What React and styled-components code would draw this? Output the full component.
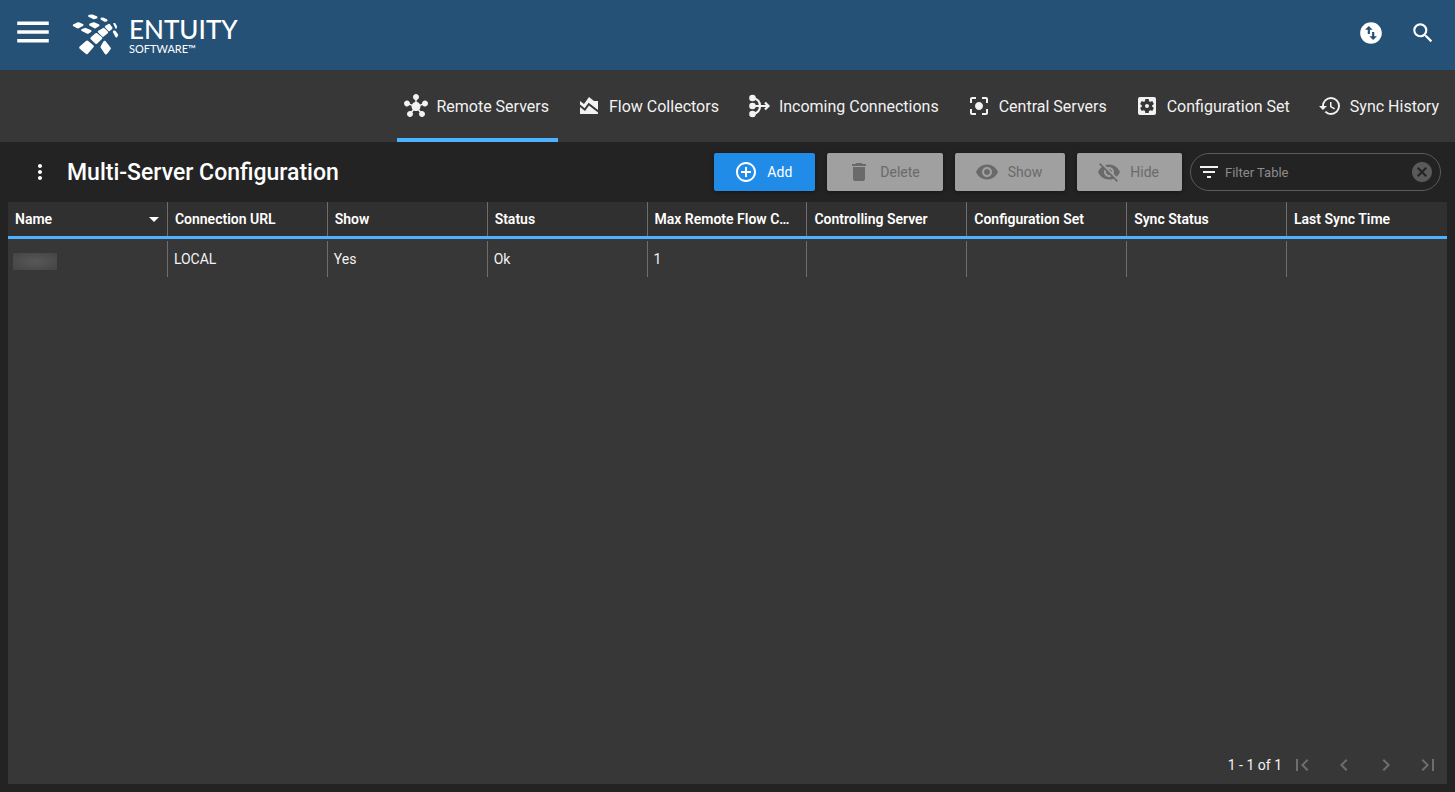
import React, { useState } from "react"
import styled, { createGlobalStyle } from "styled-components"
import {
    MdMenu, MdSearch, MdSwapVerticalCircle, MdHub, MdAreaChart, MdCenterFocusStrong,
    MdSettingsApplications, MdHistory, MdMoreVert, MdAddCircleOutline, MdDelete,
    MdVisibility, MdVisibilityOff, MdFilterList, MdCancel, MdArrowDropDown,
    MdFirstPage, MdChevronLeft, MdChevronRight, MdLastPage
} from "react-icons/md"

const GlobalStyle = createGlobalStyle`
    * {
        box-sizing: border-box;
    }

    body {
        margin: 0;
        background: #232323;
        color: #f2f2f2;
        font-family: Roboto, "Liberation Sans", sans-serif;
        font-size: 14px;
    }

    button, input {
        font-family: inherit;
        font-size: inherit;
    }
`

const Page = styled.div`
    min-height: 100vh;
    display: flex;
    flex-direction: column;
`

const Header = styled.header`
    height: 70px;
    padding: 0 19px 6px 12px;
    background: #265176;
    display: flex;
    align-items: center;
`

const IconButton = styled.button`
    display: flex;
    padding: 0;
    border: 0;
    background: none;
    color: ${props => props.$color || "#fff"};
    cursor: pointer;

    &:disabled {
        cursor: default;
    }
`

const Brand = styled.a`
    display: flex;
    align-items: center;
    gap: 10px;
    margin-left: 18px;
    padding-top: 5px;
    color: #fff;
    text-decoration: none;
    font-family: Lato, sans-serif;
`

const BrandText = styled.span`
    display: flex;
    flex-direction: column;
    padding-top: 2px;
`

const BrandName = styled.span`
    font-size: 26px;
    font-weight: 500;
    line-height: 26px;
`

const BrandSub = styled.span`
    font-size: 11px;
    line-height: 13px;
`

const HeaderActions = styled.div`
    margin-left: auto;
    padding-top: 2px;
    display: flex;
    align-items: center;
    gap: 26px;
`

const Nav = styled.nav`
    height: 72px;
    padding-right: 7px;
    background: #373737;
    display: flex;
    justify-content: flex-end;
    gap: 12px;
`

const Tab = styled.a`
    display: flex;
    align-items: center;
    gap: 8px;
    padding: 4px 9px 0 7px;
    border-bottom: 4px solid ${props => props.$active ? "#4db2ff" : "transparent"};
    color: #f2f2f2;
    font-size: 16px;
    text-decoration: none;
    white-space: nowrap;
`

const Main = styled.main`
    flex: 1;
    display: flex;
    flex-direction: column;
    padding: 0 8px 8px;
`

const Toolbar = styled.div`
    height: 60px;
    padding: 0 6px 0 20px;
    display: flex;
    align-items: center;
`

const Title = styled.h1`
    margin: 0 auto 0 15px;
    font-size: 23px;
    font-weight: 500;
    line-height: 29px;
    color: #fff;
`

const Actions = styled.div`
    display: flex;
    gap: 12px;
    margin-right: 8px;
`

const ActionButton = styled.button`
    height: 38px;
    padding: 0 23px 0 20px;
    border: 0;
    border-radius: 2px;
    display: flex;
    align-items: center;
    gap: 9px;
    background: #208ce8;
    color: #fff;
    box-shadow: 0 1px 4px rgba(0, 0, 0, .4);

    &:disabled {
        background: #a0a0a0;
        color: #6a6a6a;
    }
`

const Filter = styled.label`
    width: 251px;
    height: 38px;
    padding: 0 6px;
    border: 1px solid #5a5a5a;
    border-radius: 19px;
    display: flex;
    align-items: center;
    gap: 4px;
`

const FilterInput = styled.input`
    flex: 1;
    min-width: 0;
    padding: 0;
    border: 0;
    outline: 0;
    background: none;
    color: #f2f2f2;
    font-size: 13px;

    &::placeholder {
        color: #8c8c8c;
        opacity: 1;
    }
`

const Panel = styled.section`
    flex: 1;
    display: flex;
    flex-direction: column;
    background: #373737;
`

const Table = styled.table`
    width: 100%;
    table-layout: fixed;
    border-collapse: separate;
    border-spacing: 0;
`

const Th = styled.th`
    height: 37px;
    padding: 0;
    border-bottom: 3px solid #4db2ff;
    background: #303030;
    text-align: left;
    font-weight: 600;
    color: #fff;
`

const HeadCell = styled.div`
    height: 34px;
    padding: 0 1px 0 7px;
    border-right: 1px solid ${props => props.$last ? "transparent" : "#6e6e6e"};
    display: flex;
    align-items: center;
    justify-content: space-between;
`

const Ellipsis = styled.span`
    overflow: hidden;
    text-overflow: ellipsis;
    white-space: nowrap;
    padding-right: 10px;
`

const Td = styled.td`
    padding: 2px 0 0;
`

const BodyCell = styled.div`
    height: 36px;
    padding: 0 6px;
    border-right: 1px solid ${props => props.$last ? "transparent" : "#6e6e6e"};
    display: flex;
    align-items: center;
`

const Redacted = styled.span`
    width: 44px;
    height: 17px;
    margin: 4px 0 0 -1px;
    background: radial-gradient(#585858, #444);
`

const Footer = styled.footer`
    margin-top: auto;
    height: 38px;
    padding-right: 7px;
    display: flex;
    align-items: center;
    justify-content: flex-end;
`

const Pager = styled.div`
    display: flex;
    gap: 18px;
    margin-left: 8px;
`

const MergeIcon = () => (
    <svg width="24" height="24" viewBox="0 0 24 24" fill="currentColor" aria-hidden="true">
        <circle cx="5.500" cy="4" r="3.300" />
        <circle cx="5.500" cy="12" r="3.300" />
        <circle cx="5.500" cy="20" r="3.300" />
        <path d="M6 4c5 1 7 4 7 8s-2 7-7 8M6 12h15.500M18 8.500 21.500 12l-3.500 3.500" fill="none" stroke="currentColor" strokeWidth="2.200" />
    </svg>
)

const LogoMark = () => (
    <svg width="47" height="41" viewBox="5 12 141 123" fill="#fff" stroke="#fff" strokeWidth="7" strokeLinejoin="round" aria-hidden="true">
        <path d="M50 96L66 109 49 128 31 113z" strokeWidth="9" />
        <path d="M103 97L117 115 107 129 95 111z" strokeWidth="9" />
        <path d="M78 73L92 84 78 98 64 85z" strokeWidth="8" />
        <path d="M36 60L45 57 60 63 52 68z" />
        <path d="M86 65L100 57 110 67 98 77z" />
        <path d="M11 46L24 40 36 45 22 52z" />
        <path d="M60 44L70 40 84 46 74 52z" />
        <path d="M107 50L116 45 123 54 116 60z" />
        <path d="M57 18L65 17 78 22 70 24z" />
        <path d="M94 26L100 27 108 31 104 32z" />
        <path d="M131 65L133 65 140 75 138 79z" />
        <path d="M131 41L133 41 138 49 137 54z" strokeWidth="4" />
    </svg>
)

const tabs = [
    { label: "Remote Servers", icon: <MdHub size={24} /> },
    { label: "Flow Collectors", icon: <MdAreaChart size={24} /> },
    { label: "Incoming Connections", icon: <MergeIcon /> },
    { label: "Central Servers", icon: <MdCenterFocusStrong size={24} /> },
    { label: "Configuration Set", icon: <MdSettingsApplications size={24} /> },
    { label: "Sync History", icon: <MdHistory size={24} /> }
]

const columns = [
    "Name", "Connection URL", "Show", "Status", "Max Remote Flow Collectors",
    "Controlling Server", "Configuration Set", "Sync Status", "Last Sync Time"
]

const row = [<Redacted />, "LOCAL", "Yes", "Ok", "1", "", "", "", ""]

const App = () => {
    const [filter, setFilter] = useState("")

    return (
        <Page>
            <GlobalStyle />
            <Header>
                <IconButton aria-label="Menu"><MdMenu size={42} /></IconButton>
                <Brand href="#" aria-label="Entuity Software">
                    <LogoMark />
                    <BrandText>
                        <BrandName>ENTUITY</BrandName>
                        <BrandSub>SOFTWARE™</BrandSub>
                    </BrandText>
                </Brand>
                <HeaderActions>
                    <IconButton aria-label="Switch server"><MdSwapVerticalCircle size={26} /></IconButton>
                    <IconButton aria-label="Search"><MdSearch size={26} /></IconButton>
                </HeaderActions>
            </Header>
            <Nav>
                {tabs.map((tab, i) => (
                    <Tab key={tab.label} href="#" $active={i === 0}>
                        {tab.icon}
                        {tab.label}
                    </Tab>
                ))}
            </Nav>
            <Main>
                <Toolbar>
                    <IconButton aria-label="More"><MdMoreVert size={24} /></IconButton>
                    <Title>Multi-Server Configuration</Title>
                    <Actions>
                        <ActionButton><MdAddCircleOutline size={24} />Add</ActionButton>
                        <ActionButton disabled><MdDelete size={24} />Delete</ActionButton>
                        <ActionButton disabled><MdVisibility size={24} />Show</ActionButton>
                        <ActionButton disabled><MdVisibilityOff size={24} />Hide</ActionButton>
                    </Actions>
                    <Filter>
                        <MdFilterList size={24} />
                        <FilterInput
                            aria-label="Filter Table"
                            placeholder="Filter Table"
                            value={filter}
                            onChange={e => setFilter(e.target.value)}
                        />
                        <IconButton $color="#5a5a5a" aria-label="Clear filter" onClick={() => setFilter("")}>
                            <MdCancel size={24} />
                        </IconButton>
                    </Filter>
                </Toolbar>
                <Panel>
                    <Table>
                        <thead>
                            <tr>
                                {columns.map((name, i) => (
                                    <Th key={name}>
                                        <HeadCell $last={i === columns.length - 1}>
                                            <Ellipsis>{name}</Ellipsis>
                                            {i === 0 && <MdArrowDropDown size={24} />}
                                        </HeadCell>
                                    </Th>
                                ))}
                            </tr>
                        </thead>
                        <tbody>
                            <tr>
                                {row.map((value, i) => (
                                    <Td key={columns[i]}>
                                        <BodyCell $last={i === columns.length - 1}>{value}</BodyCell>
                                    </Td>
                                ))}
                            </tr>
                        </tbody>
                    </Table>
                    <Footer>
                        <span>1 - 1 of 1</span>
                        <Pager>
                            <IconButton disabled $color="#6e6e6e" aria-label="First page"><MdFirstPage size={24} /></IconButton>
                            <IconButton disabled $color="#6e6e6e" aria-label="Previous page"><MdChevronLeft size={24} /></IconButton>
                            <IconButton disabled $color="#6e6e6e" aria-label="Next page"><MdChevronRight size={24} /></IconButton>
                            <IconButton disabled $color="#6e6e6e" aria-label="Last page"><MdLastPage size={24} /></IconButton>
                        </Pager>
                    </Footer>
                </Panel>
            </Main>
        </Page>
    )
}

export default App
